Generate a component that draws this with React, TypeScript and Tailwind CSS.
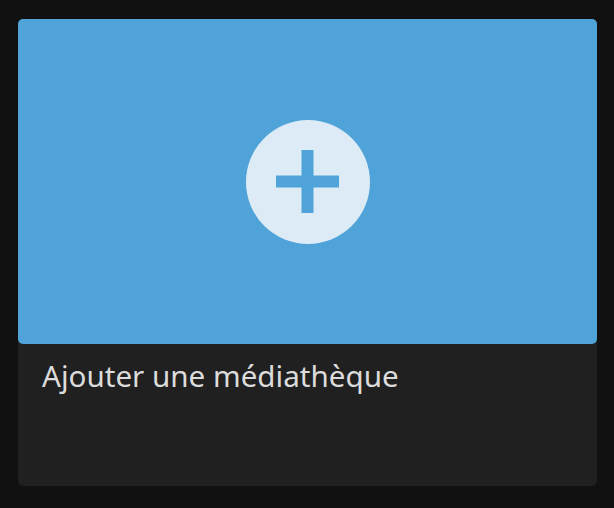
import React from 'react';

const App = () => {
  return (
    <div className="w-[614px] h-[508px] bg-[#111111] pt-[19px] pl-[18px]">
      <div className="w-[579px] h-[467px] bg-[#202020] rounded-[5px] flex flex-col">
        <div className="h-[325px] bg-[#4fa3d8] rounded-[5px] flex items-center justify-center">
          <div className="w-[124px] h-[124px] rounded-full bg-[#dcebf6] flex items-center justify-center">
            <svg width="63" height="63" viewBox="0 0 63 63">
              <rect x="25.5" y="0" width="12" height="63" fill="#4fa3d8" />
              <rect x="0" y="25.5" width="63" height="12" fill="#4fa3d8" />
            </svg>
          </div>
        </div>
        <p className="pl-[24px] pt-[12px] text-[29.6px] leading-[40px] text-[#dcdcdc] font-['Noto_Sans',sans-serif]">
          Ajouter une médiathèque
        </p>
      </div>
    </div>
  );
};

export default App;
